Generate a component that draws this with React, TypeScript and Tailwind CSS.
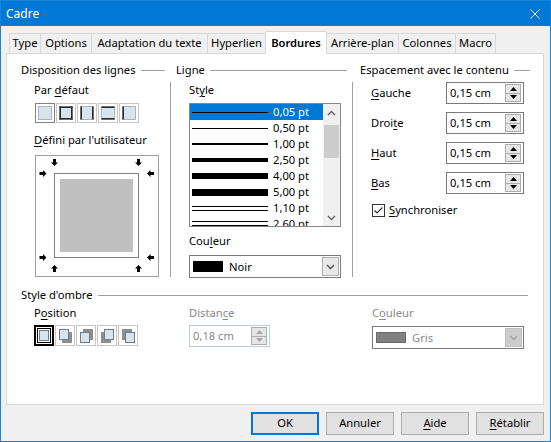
import React from 'react';

const U = ({ children }: { children: React.ReactNode }) => (
  <span className="underline decoration-1 underline-offset-[2px]">{children}</span>
);

const Header = ({ title, className = '' }: { title: string; className?: string }) => (
  <div className={`flex h-[14px] items-center gap-[5px] ${className}`}>
    <span className="whitespace-nowrap leading-[14px]">{title}</span>
    <div className="h-px flex-1 bg-[#a0a0a0]" />
  </div>
);

const tabs = [
  { label: 'Type', w: 'w-[31px]' },
  { label: 'Options', w: 'w-[51px]' },
  { label: 'Adaptation du texte', w: 'w-[116px]' },
  { label: 'Hyperlien', w: 'w-[58px]' },
  { label: 'Bordures', w: 'w-[62px]', active: true },
  { label: 'Arrière-plan', w: 'w-[71px]', noLeft: true },
  { label: 'Colonnes', w: 'w-[57px]' },
  { label: 'Macro', w: 'w-[41px]', last: true },
];

const Chevron = ({ dir = 'down', color = '#606060' }: { dir?: 'up' | 'down'; color?: string }) => (
  <svg width="9" height="6" viewBox="0 0 9 6">
    <path d={dir === 'up' ? 'M1 5 L4.5 1.5 L8 5' : 'M1 1 L4.5 4.5 L8 1'} stroke={color} strokeWidth="1.3" fill="none" />
  </svg>
);

// preset buttons for "Par défaut"
const Preset = ({ kind, focused }: { kind: 'none' | 'outer' | 'lr' | 'tb' | 'l'; focused?: boolean }) => (
  <svg width="20" height="20" viewBox="0 0 20 20">
    {focused ? (
      <rect x="0.5" y="0.5" width="19" height="19" fill="none" stroke="#000" strokeDasharray="1 1" />
    ) : (
      <rect x="0.5" y="0.5" width="19" height="19" fill="none" stroke="#c6c6c6" />
    )}
    <rect x="3.5" y="3.5" width="13" height="13" fill="#dbe3ea" stroke="#aab4be" />
    {(kind === 'outer' || kind === 'lr' || kind === 'l') && <path d="M4.25 3.5 V16.5" stroke="#2a2a2a" strokeWidth="1.5" />}
    {(kind === 'outer' || kind === 'lr') && <path d="M15.75 3.5 V16.5" stroke="#2a2a2a" strokeWidth="1.5" />}
    {(kind === 'outer' || kind === 'tb') && <path d="M3.5 4.25 H16.5 M3.5 15.75 H16.5" stroke="#2a2a2a" strokeWidth="1.5" />}
  </svg>
);

// shadow position buttons
const ShadowBtn = ({ pos, selected }: { pos: 'none' | 'br' | 'tr' | 'bl' | 'tl'; selected?: boolean }) => {
  const sq = { none: [5, 5], br: [4, 4], tr: [4, 7], bl: [7, 4], tl: [7, 7] }[pos];
  const sh = { none: [5, 5], br: [7, 7], tr: [7, 4], bl: [4, 7], tl: [4, 4] }[pos];
  return (
    <svg width="20" height="21" viewBox="0 0 20 21">
      {selected ? (
        <>
          <rect x="1" y="1" width="18" height="19" fill="none" stroke="#000" strokeWidth="2" />
          <rect x="3.5" y="3.5" width="13" height="14" fill="none" stroke="#000" />
        </>
      ) : (
        <rect x="0.5" y="0.5" width="19" height="20" fill="none" stroke="#c6c6c6" />
      )}
      {pos !== 'none' && <rect x={sh[0]} y={sh[1]} width="10" height="11" fill="#8e8e8e" />}
      <rect
        x={sq[0] + 0.5}
        y={sq[1] + 0.5}
        width={pos === 'none' ? 9 : 9}
        height={pos === 'none' ? 10 : 10}
        fill="#dbe3ea"
        stroke="#6f7b87"
      />
    </svg>
  );
};

const Arrow = ({ x, y, rot }: { x: number; y: number; rot: number }) => (
  <path
    transform={`translate(${x} ${y}) rotate(${rot})`}
    d="M-1.5 -3.5 H1.5 V0 H3.5 L0 3.5 L-3.5 0 H-1.5 Z"
    fill="#000"
  />
);

const UserBox = () => (
  <svg width="124" height="122" viewBox="0 0 124 122">
    <rect x="0.5" y="0.5" width="123" height="121" fill="#fff" stroke="#a0a0a0" />
    <rect x="19.5" y="18.5" width="84" height="84" fill="none" stroke="#000" strokeDasharray="1 1" />
    <rect x="25" y="24" width="73" height="73" fill="#c0c0c0" />
    <Arrow x={19.5} y={7.5} rot={0} />
    <Arrow x={103.5} y={7.5} rot={0} />
    <Arrow x={8} y={18.5} rot={-90} />
    <Arrow x={8} y={102.5} rot={-90} />
    <Arrow x={115.5} y={18.5} rot={90} />
    <Arrow x={115.5} y={102.5} rot={90} />
    <Arrow x={19.5} y={113.5} rot={180} />
    <Arrow x={103.5} y={113.5} rot={180} />
  </svg>
);

const Spin = ({ value, w = 'w-[78px]', disabled }: { value: string; w?: string; disabled?: boolean }) => {
  const c = disabled ? '#a8a8a8' : '#000';
  return (
    <div
      className={`flex h-[22px] items-center justify-between border bg-white pl-[3px] pr-[2px] ${w} ${
        disabled ? 'border-[#bccde0] text-[#8a8a8a]' : 'border-[#7a7a7a]'
      }`}
    >
      <span className="leading-[14px]">{value}</span>
      <div className="flex h-[18px] w-[16px] flex-col border border-[#adadad] bg-[#e6e6e6]">
        <div className="flex flex-1 items-center justify-center border-b border-[#adadad]">
          <svg width="7" height="4" viewBox="0 0 7 4"><path d="M0 4 L3.5 0 L7 4 Z" fill={c} /></svg>
        </div>
        <div className="flex flex-1 items-center justify-center">
          <svg width="7" height="4" viewBox="0 0 7 4"><path d="M0 0 L7 0 L3.5 4 Z" fill={c} /></svg>
        </div>
      </div>
    </div>
  );
};

const ColorSelect = ({ label, disabled }: { label: string; disabled?: boolean }) => (
  <div className="flex h-[23px] w-[152px] items-center border border-[#7a7a7a] bg-white pl-[3px] pr-px">
    <div className={`h-[11px] w-[30px] border ${disabled ? 'border-[#6a6a6a] bg-[#808080]' : 'border-black bg-black'}`} />
    <span className={`ml-[6px] flex-1 leading-[14px] ${disabled ? 'text-[#8a8a8a]' : ''}`}>{label}</span>
    <div
      className={`flex h-[19px] w-[17px] items-center justify-center border ${
        disabled ? 'border-[#bfbfbf] bg-[#cccccc]' : 'border-[#adadad] bg-[#e8e8e8]'
      }`}
    >
      <Chevron color={disabled ? '#a0a0a0' : '#505050'} />
    </div>
  </div>
);

const lineItems: { t: string; cls?: string; dbl?: string[] }[] = [
  { t: '0,05 pt', cls: 'h-px' },
  { t: '0,50 pt', cls: 'h-px' },
  { t: '1,00 pt', cls: 'h-[2px]' },
  { t: '2,50 pt', cls: 'h-[4px]' },
  { t: '4,00 pt', cls: 'h-[6px]' },
  { t: '5,00 pt', cls: 'h-[7px]' },
  { t: '1,10 pt', dbl: ['h-px', 'h-px'] },
  { t: '2,60 pt', dbl: ['h-px', 'h-[2px]'] },
];

const StyleList = () => (
  <div className="flex h-[124px] w-[152px] border border-[#828790] bg-white">
    <div className="flex-1 overflow-hidden">
      {lineItems.map((it, i) => (
        <div key={it.t} className={`flex h-[16px] items-center pl-[2px] ${i === 0 ? 'bg-[#0078d7] text-white' : ''}`}>
          {it.dbl ? (
            <div className="flex w-[76px] flex-col gap-[3px]">
              <div className={`${it.dbl[0]} w-full bg-black`} />
              <div className={`${it.dbl[1]} w-full bg-black`} />
            </div>
          ) : (
            <div className={`${it.cls} w-[76px] bg-black`} />
          )}
          <span className="ml-[5px] leading-[14px]">{it.t}</span>
        </div>
      ))}
    </div>
    <div className="flex w-[17px] flex-col bg-[#f0f0f0]">
      <div className="flex h-[17px] items-center justify-center"><Chevron dir="up" /></div>
      <div className="mx-px mt-[4px] h-[33px] bg-[#cdcdcd]" />
      <div className="mt-auto flex h-[17px] items-center justify-center"><Chevron /></div>
    </div>
  </div>
);

const Checkbox = () => (
  <svg width="13" height="13" viewBox="0 0 13 13">
    <rect x="0.5" y="0.5" width="12" height="12" fill="#fff" stroke="#333" />
    <path d="M2.5 6.5 L5 9 L10.5 3.5" stroke="#333" strokeWidth="1.2" fill="none" />
  </svg>
);

export default function App() {
  return (
    <div className="flex h-[442px] w-[551px] flex-col border border-[#1883d7] bg-[#f0f0f0] font-['Noto_Sans',sans-serif] text-[11.2px] text-black">
      {/* Title bar */}
      <div className="flex h-[25px] items-center justify-between bg-[#0078d7] pl-[5px] pr-[10px] text-white">
        <span className="text-[12px]">Cadre</span>
        <svg width="10" height="10" viewBox="0 0 10 10">
          <path d="M0.5 0.5 L9.5 9.5 M9.5 0.5 L0.5 9.5" stroke="#fff" strokeWidth="1" />
        </svg>
      </div>

      {/* Tabs */}
      <div className="mt-[5px] flex h-[22px] items-end pl-[8px]">
        {tabs.map((t) => (
          <div
            key={t.label}
            className={`flex items-center justify-center border-t border-[#d9d9d9] whitespace-nowrap ${t.w} ${
              t.noLeft ? '' : 'border-l'
            } ${t.last ? 'border-r' : ''} ${
              t.active ? 'relative z-10 -mb-px h-[23px] border-r bg-white font-semibold' : 'h-[20px] bg-[#f0f0f0]'
            }`}
          >
            {t.label}
          </div>
        ))}
      </div>

      {/* Page */}
      <div className="ml-[5px] h-[352px] w-[538px] border border-[#d9d9d9] bg-white pl-[14px] pt-[9px]">
        <div className="flex">
          {/* Disposition des lignes */}
          <div className="w-[155px]">
            <Header title="Disposition des lignes" className="pr-[11px]" />
            <div className="ml-[13px] mt-[5px] h-[195px] w-[137px] border-r border-[#a0a0a0] pt-px">
              <div className="h-[14px] leading-[14px]">
                Par <U>d</U>éfaut
              </div>
              <div className="mt-[6px] flex gap-px pl-px">
                <Preset kind="none" focused />
                <Preset kind="outer" />
                <Preset kind="lr" />
                <Preset kind="tb" />
                <Preset kind="l" />
              </div>
              <div className="mt-[10px] h-[14px] leading-[14px]">
                <U>D</U>éfini par l'utilisateur
              </div>
              <div className="mt-[8px] pl-px">
                <UserBox />
              </div>
            </div>
          </div>

          {/* Ligne */}
          <div className="w-[184px]">
            <Header title="Ligne" className="pr-[13px]" />
            <div className="ml-[13px] mt-[5px] h-[195px] w-[164px] border-r border-[#a0a0a0] pt-px">
              <div className="h-[14px] leading-[14px]">
                St<U>y</U>le
              </div>
              <div className="mt-[6px]">
                <StyleList />
              </div>
              <div className="mt-[7px] h-[14px] leading-[14px]">
                Cou<U>l</U>eur
              </div>
              <div className="mt-[7px]">
                <ColorSelect label="Noir" />
              </div>
            </div>
          </div>

          {/* Espacement */}
          <div className="w-[170px]">
            <Header title="Espacement avec le contenu" />
            <div className="ml-[11px] mt-[5px] flex flex-col gap-[8px]">
              {[
                [<U key="g">G</U>, 'auche'],
                ['Droi', <U key="t">t</U>, 'e'],
                [<U key="h">H</U>, 'aut'],
                [<U key="b">B</U>, 'as'],
              ].map((parts, i) => (
                <div key={i} className="flex h-[22px] items-center">
                  <span className="w-[75px] leading-[14px]">{parts}</span>
                  <Spin value="0,15 cm" />
                </div>
              ))}
              <div className="flex h-[16px] items-center pl-px">
                <Checkbox />
                <span className="ml-[4px] leading-[14px]">
                  <U>S</U>ynchroniser
                </span>
              </div>
            </div>
          </div>
        </div>

        {/* Style d'ombre */}
        <Header title="Style d'ombre" className="mt-[11px] w-[507px]" />
        <div className="mt-[4px] flex">
          <div className="ml-[13px] w-[155px]">
            <div className="h-[14px] leading-[14px]">
              P<U>o</U>sition
            </div>
            <div className="mt-[5px] flex gap-px">
              <ShadowBtn pos="none" selected />
              <ShadowBtn pos="br" />
              <ShadowBtn pos="tr" />
              <ShadowBtn pos="bl" />
              <ShadowBtn pos="tl" />
            </div>
          </div>
          <div className="w-[183px]">
            <div className="h-[14px] leading-[14px] text-[#8a8a8a]">
              Distan<U>c</U>e
            </div>
            <div className="mt-[5px]">
              <Spin value="0,18 cm" w="w-[81px]" disabled />
            </div>
          </div>
          <div>
            <div className="h-[14px] leading-[14px] text-[#8a8a8a]">
              C<U>o</U>uleur
            </div>
            <div className="mt-[6px]">
              <ColorSelect label="Gris" disabled />
            </div>
          </div>
        </div>
      </div>

      {/* Buttons */}
      <div className="mt-[7px] flex justify-end gap-[7px] pr-[6px]">
        <button className="h-[23px] w-[68px] border-2 border-[#0078d7] bg-[#e1e1e1]">OK</button>
        <button className="h-[23px] w-[68px] border border-[#adadad] bg-[#e1e1e1]">Annuler</button>
        <button className="h-[23px] w-[68px] border border-[#adadad] bg-[#e1e1e1]">
          <U>A</U>ide
        </button>
        <button className="h-[23px] w-[68px] border border-[#adadad] bg-[#e1e1e1]">
          <U>R</U>établir
        </button>
      </div>
    </div>
  );
}
